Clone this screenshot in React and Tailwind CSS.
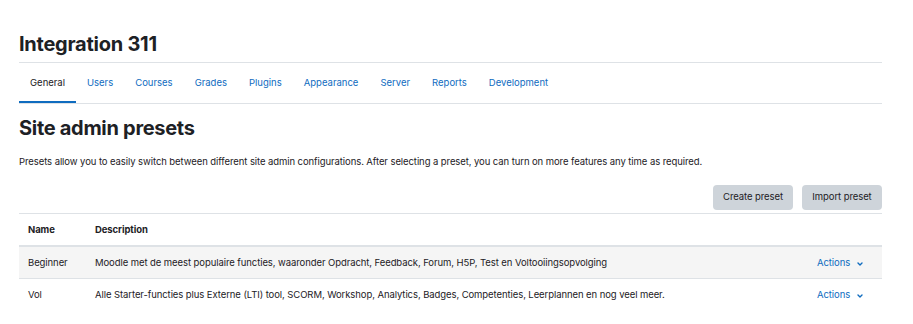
import React from "react";

const tabs = ["General", "Users", "Courses", "Grades", "Plugins", "Appearance", "Server", "Reports", "Development"];

function Chevron() {
  return (
    <svg width="8" height="8" viewBox="0 0 8 8" className="ml-[6px] mt-[1px]">
      <path d="M2 3 L4 4.9 L6 3" fill="none" stroke="#0f6cbf" strokeWidth="1.4" strokeLinecap="round" strokeLinejoin="round" />
    </svg>
  );
}

export default function App() {
  const rows = [
    ["Beginner", "Moodle met de meest populaire functies, waaronder Opdracht, Feedback, Forum, H5P, Test en Voltooiingsopvolging", true],
    ["Vol", "Alle Starter-functies plus Externe (LTI) tool, SCORM, Workshop, Analytics, Badges, Competenties, Leerplannen en nog veel meer.", false],
  ];
  return (
    <div className="w-[913px] h-[324px] bg-white text-[#1d2125] overflow-hidden text-[9.5px] tracking-[-0.08px]" style={{ fontFamily: "Inter, 'Noto Sans', sans-serif" }}>
      <div className="ml-[19px] w-[863px] pt-[32px]">
        <div className="border-b border-[#dee2e6] pb-[6px]">
          <h1 className="text-[20px] leading-[24px] font-bold tracking-[-0.25px]">Integration 311</h1>
        </div>
        <nav className="flex border-b border-[#dee2e6] h-[41px] tracking-normal">
          {tabs.map((t, i) => (
            <div
              key={t}
              className={
                "h-[40px] px-[11px] flex items-center " +
                (i === 0 ? "text-[#1d2125] border-b-2 border-[#0f6cbf]" : "text-[#0f6cbf]")
              }
            >
              <span className={i === 0 ? "pt-[2px]" : ""}>{t}</span>
            </div>
          ))}
        </nav>
        <h2 className="mt-[12px] text-[20px] leading-[24px] font-bold tracking-[-0.3px]">Site admin presets</h2>
        <p className="mt-[14px] leading-[16px]">
          Presets allow you to easily switch between different site admin configurations. After selecting a preset, you can turn on more features any time as required.
        </p>
        <div className="flex justify-end gap-[9px] mt-[15px]">
          <button className="h-[25px] w-[80px] rounded-[4px] bg-[#ced4da] text-[#1d2125]">Create preset</button>
          <button className="h-[25px] w-[80px] rounded-[4px] bg-[#ced4da] text-[#1d2125]">Import preset</button>
        </div>
        <div className="mt-[3px] border-t border-[#dee2e6]">
          <div className="flex h-[33px] pt-[1px] items-center border-b-2 border-[#dee2e6] font-bold">
            <div className="w-[76px] pl-[9px]">Name</div>
            <div className="flex-1">Description</div>
          </div>
          {rows.map(([n, d, striped]) => (
            <div key={n} className={"flex h-[32px] pt-[1px] items-center border-b " + (striped ? "bg-[#f5f5f5] border-[#dee2e6]" : "border-transparent")}>
              <div className="w-[76px] pl-[9px]">{n}</div>
              <div className="flex-1">{d}</div>
              <div className="w-[65px] flex items-center text-[#0f6cbf]">
                Actions
                <Chevron />
              </div>
            </div>
          ))}
        </div>
      </div>
    </div>
  );
}
